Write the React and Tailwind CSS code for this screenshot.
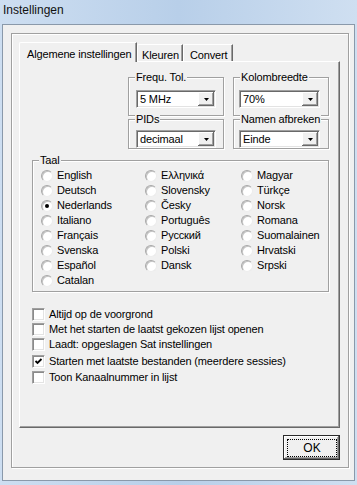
import React from "react";

function Group({ label, className = "", children }) {
  return (
    <div
      className={
        "relative border border-[#a0a0a0] shadow-[inset_1px_1px_0_#fff,1px_1px_0_#fff] " +
        className
      }
    >
      <span className="absolute left-[6px] top-[-8px] bg-[#f0f0f0] px-[1px] leading-[14px]">
        {label}
      </span>
      {children}
    </div>
  );
}

function Combo({ value, w = "w-[80px]" }) {
  return (
    <div
      className={
        w +
        " h-[18px] bg-white border border-t-[#a0a0a0] border-l-[#a0a0a0] border-r-white border-b-white shadow-[inset_1px_1px_0_#696969,inset_-1px_-1px_0_#e3e3e3] flex items-stretch p-[1px]"
      }
    >
      <span className="flex-1 pl-[2px] leading-[14px]">{value}</span>
      <span className="w-[16px] bg-[#f0f0f0] shadow-[inset_-1px_-1px_0_#696969,inset_1px_1px_0_#fff,inset_-2px_-2px_0_#a0a0a0] flex items-center justify-center">
        <svg width="5" height="3" viewBox="0 0 5 3">
          <polygon points="0,0 5,0 2.5,3" fill="#000" />
        </svg>
      </span>
    </div>
  );
}

function Radio({ label, checked }) {
  return (
    <div className="h-[15px] flex items-center">
      <span className="w-[12px] h-[12px] shrink-0 rounded-full bg-white border border-[#a8a8a8] border-r-[#ececec] border-b-[#ececec] shadow-[inset_1px_1px_0_#c4c4c4] flex items-center justify-center">
        {checked && <span className="w-[4px] h-[4px] rounded-full bg-black" />}
      </span>
      <span className="ml-[4px] whitespace-nowrap">{label}</span>
    </div>
  );
}

function Check({ label, checked }) {
  return (
    <div className="h-[15px] flex items-center">
      <span className="w-[13px] h-[13px] shrink-0 bg-white border border-t-[#a0a0a0] border-l-[#a0a0a0] border-r-white border-b-white shadow-[inset_1px_1px_0_#8a8a8a,inset_-1px_-1px_0_#e3e3e3] flex items-center justify-center">
        {checked && (
          <svg width="9" height="9" viewBox="0 0 9 9">
            <path d="M1.5 4 L3.5 6 L7.5 2" stroke="#000" strokeWidth="1.8" fill="none" />
          </svg>
        )}
      </span>
      <span className="ml-[4px] whitespace-nowrap">{label}</span>
    </div>
  );
}

const col1 = ["English", "Deutsch", "Nederlands", "Italiano", "Français", "Svenska", "Español", "Catalan"];
const col2 = ["Ελληνικά", "Slovensky", "Česky", "Português", "Русский", "Polski", "Dansk"];
const col3 = ["Magyar", "Türkçe", "Norsk", "Romana", "Suomalainen", "Hrvatski", "Srpski"];

export default function App() {
  return (
    <div className="w-[357px] h-[485px] overflow-hidden flex flex-col bg-gradient-to-r from-[#cddef1] via-[#b8cfe9] to-[#cfdff1] font-['Liberation_Sans',sans-serif] text-[11px] tracking-[-0.15px] text-black">
      <div className="h-[24px] shrink-0 pl-[3px] pb-[4px] flex items-center text-[12px] tracking-normal text-[#111]">
        Instellingen
      </div>
      <div className="mx-[2px] mb-[4px] flex-1 border border-[#8a99aa] bg-[#f0f0f0] pl-[8px] pt-[8px] pr-[5px] pb-[12px] flex">
        <div className="flex-1 border border-[#a0a0a0] shadow-[inset_1px_1px_0_#fff,1px_1px_0_#fff] pl-[7px] pt-[8px] pr-[8px] pb-[7px] flex flex-col">
          {/* Tab control */}
          <div className="w-[321px] flex flex-col">
            <div className="flex items-end h-[19px]">
              <div className="relative z-10 h-[20px] mb-[-1px] w-[118px] bg-[#f0f0f0] border-l border-t border-white border-r border-r-[#696969] shadow-[inset_-1px_0_0_#a0a0a0] rounded-tl-[2px] flex items-start pt-[3px] pl-[7px]">
                Algemene instellingen
              </div>
              <div className="h-[17px] w-[46px] border-l border-t border-white border-r border-r-[#696969] shadow-[inset_-1px_0_0_#a0a0a0] rounded-tl-[2px] flex items-start pt-[2px] pl-[4px]">
                Kleuren
              </div>
              <div className="h-[17px] w-[50px] border-l border-t border-white border-r border-r-[#696969] shadow-[inset_-1px_0_0_#a0a0a0] rounded-tl-[2px] flex items-start pt-[2px] pl-[6px]">
                Convert
              </div>
            </div>
            <div className="h-[367px] bg-[#f0f0f0] border-l border-t border-white border-r border-b border-r-[#696969] border-b-[#696969] shadow-[inset_-1px_-1px_0_#a0a0a0] flex flex-col">
              {/* top groups */}
              <div className="mt-[15px] pr-[10px] grid grid-cols-[96px_96px] justify-end gap-x-[9px] gap-y-[3px]">
                <Group label="Frequ. Tol." className="h-[39px] pt-[12px] pl-[7px]">
                  <Combo value="5 MHz" />
                </Group>
                <Group label="Kolombreedte" className="h-[39px] pt-[12px] pl-[5px]">
                  <Combo value="70%" w="w-[81px]" />
                </Group>
                <Group label="PIDs" className="h-[30px] pt-[10px] pl-[7px]">
                  <Combo value="decimaal" />
                </Group>
                <Group label="Namen afbreken" className="h-[30px] pt-[10px] pl-[5px]">
                  <Combo value="Einde" w="w-[81px]" />
                </Group>
              </div>
              {/* Taal */}
              <Group label="Taal" className="mt-[11px] ml-[12px] mr-[10px] h-[132px] pt-[7px] pl-[8px]">
                <div className="flex">
                  <div className="w-[104px] flex flex-col">
                    {col1.map((l) => (
                      <Radio key={l} label={l} checked={l === "Nederlands"} />
                    ))}
                  </div>
                  <div className="w-[96px] flex flex-col">
                    {col2.map((l) => (
                      <Radio key={l} label={l} />
                    ))}
                  </div>
                  <div className="flex flex-col">
                    {col3.map((l) => (
                      <Radio key={l} label={l} />
                    ))}
                  </div>
                </div>
              </Group>
              {/* checkboxes */}
              <div className="mt-[15px] pl-[12px] flex flex-col">
                <Check label="Altijd op de voorgrond" />
                <Check label="Met het starten de laatst gekozen lijst openen" />
                <Check label="Laadt: opgeslagen Sat instellingen" />
                <div className="h-[2px]" />
                <Check label="Starten met laatste bestanden (meerdere sessies)" checked />
                <div className="h-[1px]" />
                <Check label="Toon Kanaalnummer in lijst" />
              </div>
            </div>
          </div>
          {/* OK button */}
          <div className="mt-[7px] w-[321px] flex justify-end">
            <div className="w-[57px] h-[25px] border border-[#2a2a2a] bg-[#f0f0f0] shadow-[inset_-1px_-1px_0_#696969,inset_1px_1px_0_#fff,inset_-2px_-2px_0_#a0a0a0] pl-[3px] pt-[3px] pr-[2px] pb-[2px] flex">
              <div className="flex-1 border border-dotted border-black flex items-center justify-center text-[12px] tracking-normal">
                OK
              </div>
            </div>
          </div>
        </div>
      </div>
    </div>
  );
}
